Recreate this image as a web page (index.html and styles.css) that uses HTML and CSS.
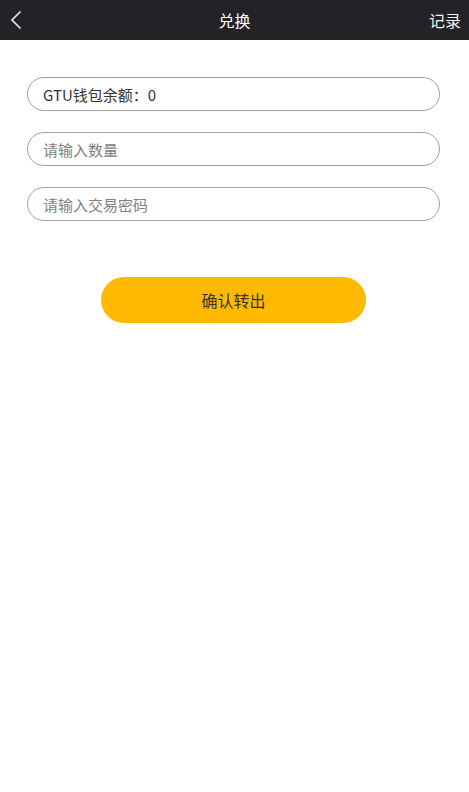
FILE: index.html
```html
<!DOCTYPE html>
<html lang="zh-CN">
<head>
<meta charset="utf-8">
<title>兑换</title>
<link rel="stylesheet" href="styles.css">
</head>
<body>
<header class="topbar">
  <a class="back" href="#" aria-label="返回">
    <svg width="12" height="20" viewBox="0 0 12 20"><polyline points="10.5,1.5 2,10 10.5,18.5" fill="none" stroke="#e6e6e6" stroke-width="1.7"/></svg>
  </a>
  <h1 class="title">兑换</h1>
  <a class="record" href="#">记录</a>
</header>
<main class="form">
  <div class="field balance">GTU钱包余额：0</div>
  <input class="field" type="text" placeholder="请输入数量">
  <input class="field" type="password" placeholder="请输入交易密码">
  <button class="submit" type="button">确认转出</button>
</main>
</body>
</html>
```
FILE: styles.css
```css
* { box-sizing: border-box; }
body {
  margin: 0;
  background: #fff;
  font-family: "Noto Sans CJK SC", "Noto Sans", sans-serif;
  color: #333;
}
.topbar {
  height: 40px;
  background: #222227;
  display: flex;
  align-items: center;
  justify-content: space-between;
  padding: 0 8px 0 10px;
  position: relative;
}
.back { display: flex; align-items: center; height: 40px; }
.title {
  position: absolute;
  left: 0; right: 0;
  margin: 0;
  text-align: center;
  font-size: 16px;
  font-weight: normal;
  color: #fff;
  line-height: 40px;
  pointer-events: none;
}
.record {
  color: #f0f0f0;
  text-decoration: none;
  font-size: 16px;
  line-height: 40px;
}
.form {
  display: flex;
  flex-direction: column;
  align-items: center;
  padding-top: 37px;
}
.field {
  width: 413px;
  height: 34px;
  margin: 0 2px 21px 0;
  border: 1px solid #a0a0a0;
  border-radius: 17px;
  padding: 0 15px;
  font-family: inherit;
  font-size: 15px;
  color: #333;
  background: #fff;
  outline: none;
  display: flex;
  align-items: center;
}
.field::placeholder { color: #808080; }
.submit {
  margin: 35px 2px 0 0;
  width: 265px;
  height: 46px;
  border: 0;
  border-radius: 23px;
  background: #ffb900;
  color: #333;
  font-family: inherit;
  font-size: 16px;
}
```
